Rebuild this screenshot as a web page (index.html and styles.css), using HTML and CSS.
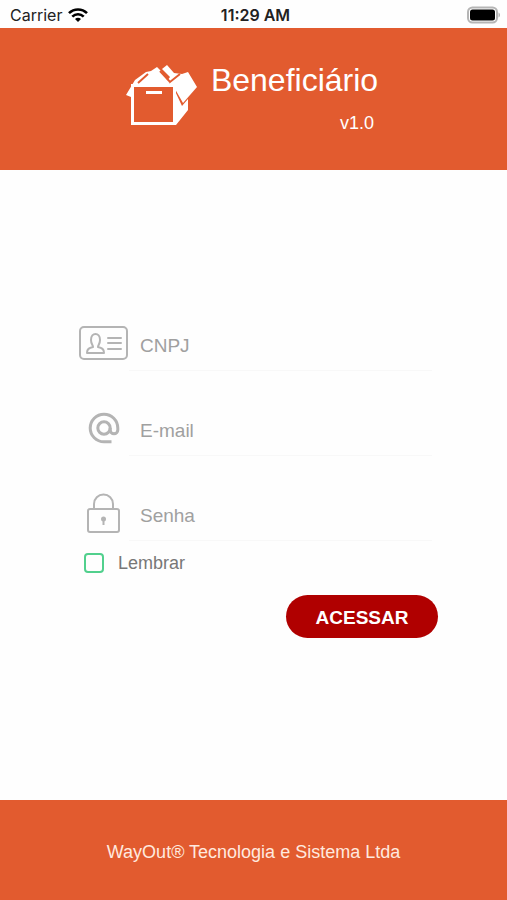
FILE: index.html
```html
<!DOCTYPE html>
<html lang="pt-BR">
<head>
    <meta charset="UTF-8">
    <meta name="viewport" content="width=device-width, initial-scale=1.0">
    <title>Beneficiário</title>
    <link rel="stylesheet" href="styles.css">
</head>
<body>
    <div class="status-bar">
        <div class="carrier">
            <span>Carrier</span>
            <svg class="wifi" viewBox="0 0 20 14" fill="none" stroke="currentColor" stroke-width="2.6">
                <path d="M1 5.2C6 .2 14 .2 19 5.2"></path>
                <path d="M4.3 8.6c3.2-3.2 8.2-3.2 11.4 0"></path>
                <path d="M10 14l-3-3.1c1.7-1.5 4.3-1.5 6 0z" fill="currentColor" stroke="none"></path>
            </svg>
        </div>
        <time>11:29 AM</time>
        <svg class="battery" viewBox="0 0 34 18">
            <rect x="1" y="1.5" width="29" height="15" rx="4.5" fill="#fff" stroke="#b5b5b5" stroke-width="2"></rect>
            <rect x="3" y="3.5" width="25" height="11" rx="2.5" fill="#000"></rect>
            <path d="M31.5 6.5c2 .8 2 4.2 0 5z" fill="#b5b5b5"></path>
        </svg>
    </div>

    <header class="header">
        <svg class="logo" viewBox="0 0 72 62">
            <!-- left flap and papers -->
            <path d="M9 16L20 8l5-1 6-4 4 4 9 13 6 3v3H5v7l-5-2z" fill="#fff"></path>
            <path d="M12 19l10-9" stroke="#e25b2f" stroke-width="2"></path>
            <!-- right flap -->
            <path d="M36 5l5-4 7 8 8 1 6-2 9 15-14 16-8-14-8-8 3-4z" fill="#fff"></path>
            <path d="M34 7l10 11 10-8" fill="none" stroke="#e25b2f" stroke-width="2"></path>
            <!-- box side and front -->
            <path d="M49 27l7 15 6-7v11L50 61z" fill="#fff"></path>
            <rect x="6.5" y="21.5" width="42" height="38" fill="#e25b2f" stroke="#fff" stroke-width="3"></rect>
            <path d="M20 28.5h16" stroke="#fff" stroke-width="3"></path>
        </svg>
        <div class="brand">
            <h1>Beneficiário</h1>
            <span class="version">v1.0</span>
        </div>
    </header>

    <main>
        <form class="login">
            <div class="field">
                <label for="cnpj" aria-label="CNPJ">
                    <svg width="50" height="38" viewBox="0 0 50 38" fill="none" stroke="currentColor" stroke-width="2" stroke-linecap="round" stroke-linejoin="round">
                        <rect x="1" y="1" width="47" height="32" rx="4"></rect>
                        <path d="M8 27c0-4 2-5 6-6 0-2-2-3-2-7 0-8 9-8 9 0 0 4-2 5-2 7 4 1 6 2 6 6z"></path>
                        <path d="M29 12h13M29 17h13M29 23h13"></path>
                    </svg>
                </label>
                <input type="text" id="cnpj" placeholder="CNPJ">
            </div>
            <div class="field">
                <label for="email" aria-label="E-mail">
                    <svg width="32" height="36" viewBox="0 0 32 36" fill="none" stroke="currentColor" stroke-width="3">
                        <circle cx="16" cy="16" r="6.2"></circle>
                        <path d="M23.5 29.8H16A13.8 13.8 0 1 1 29.8 16v2a3.8 3.8 0 0 1-7.6 0v-2"></path>
                    </svg>
                </label>
                <input type="email" id="email" placeholder="E-mail">
            </div>
            <div class="field">
                <label for="senha" aria-label="Senha">
                    <svg width="36" height="44" viewBox="0 0 36 44" fill="none" stroke="currentColor" stroke-width="2">
                        <rect x="2" y="16" width="31" height="23" rx="2"></rect>
                        <path d="M8 16v-5a9.500 9.500 0 0 1 19 0v5"></path>
                        <circle cx="17.5" cy="26" r="2.5" fill="currentColor" stroke="none"></circle>
                        <path d="M17.5 26v6"></path>
                    </svg>
                </label>
                <input type="password" id="senha" placeholder="Senha">
            </div>
            <div class="remember">
                <input type="checkbox" id="lembrar">
                <label for="lembrar">Lembrar</label>
            </div>
            <button type="submit">ACESSAR</button>
        </form>
    </main>

    <footer>WayOut® Tecnologia e Sistema Ltda</footer>
</body>
</html>
```
FILE: styles.css
```css
* {
    margin: 0;
    padding: 0;
    box-sizing: border-box;
}

body {
    display: flex;
    flex-direction: column;
    min-height: 100vh;
    background: #fefefe;
    font-family: "Liberation Sans", Arial, sans-serif;
    font-size: 18px;
}

.status-bar {
    display: grid;
    grid-template-columns: 1fr auto 1fr;
    align-items: center;
    height: 28px;
    padding: 1px 6px 0 10px;
    font-family: Inter, sans-serif;
    font-size: 16px;
    line-height: 24px;
    color: #222;
}

.status-bar time {
    font-weight: 600;
}

.carrier {
    display: flex;
    align-items: center;
    gap: 6px;
}

.wifi {
    width: 20px;
    height: 14px;
    color: #000;
}

.battery {
    width: 34px;
    height: 18px;
    justify-self: end;
}

.header {
    display: flex;
    justify-content: center;
    gap: 13px;
    height: 142px;
    padding: 33px 3px 0 0;
    background: #e25b2f;
    color: #fff;
}

.logo {
    width: 72px;
    height: 62px;
    margin-top: 3px;
}

.brand {
    display: flex;
    flex-direction: column;
    gap: 13px;
}

h1 {
    font-size: 32px;
    font-weight: normal;
    line-height: 38px;
}

.version {
    align-self: flex-end;
    padding-right: 4px;
    line-height: 22px;
}

main {
    flex: 1;
    display: flex;
    flex-direction: column;
    justify-content: center;
    padding: 0 69px 11px 79px;
}

.login {
    display: flex;
    flex-direction: column;
    gap: 35px;
}

.field {
    display: flex;
    height: 50px;
}

.field label {
    display: flex;
    align-items: center;
    justify-content: center;
    width: 50px;
    padding-bottom: 2px;
    color: #b4b4b4;
}

.field input {
    flex: 1;
    min-width: 0;
    margin-right: 6px;
    padding-left: 11px;
    border: none;
    border-bottom: 1px solid #f8f8f8;
    background: none;
    font-family: inherit;
    font-size: 19px;
    outline: none;
}

.field input::placeholder {
    color: #a0a0a0;
}

.remember {
    display: flex;
    align-items: center;
    gap: 14px;
    height: 22px;
    margin-top: -24px;
    padding-left: 5px;
    color: #777;
}

.remember input {
    appearance: none;
    width: 20px;
    height: 20px;
    border: 2px solid #51d08d;
    border-radius: 4px;
}

.remember input:checked {
    background: #51d08d;
}

button {
    align-self: flex-end;
    width: 152px;
    height: 43px;
    margin-top: -14px;
    padding-top: 2px;
    border: none;
    border-radius: 22px;
    background: #b00000;
    color: #fff;
    font-family: inherit;
    font-size: 19px;
    font-weight: bold;
    cursor: pointer;
}

footer {
    display: flex;
    align-items: center;
    justify-content: center;
    height: 100px;
    padding: 4px 8px 0;
    background: #e25b2f;
    color: #ffe9df;
    text-align: center;
}
```
